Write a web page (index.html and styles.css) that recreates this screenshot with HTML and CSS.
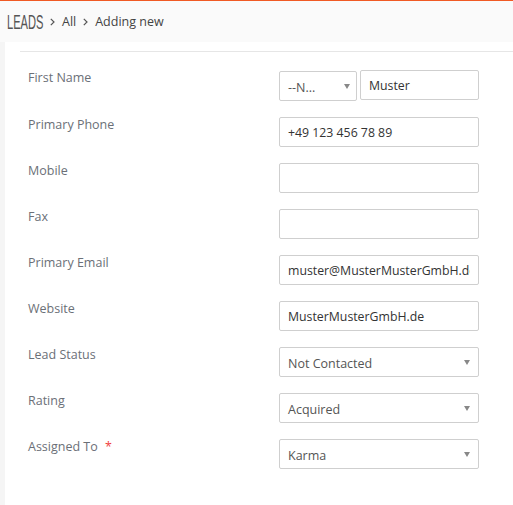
FILE: index.html
```html
<!DOCTYPE html>
<html lang="en">
<head>
<meta charset="utf-8">
<title>Leads - Adding new</title>
<link rel="stylesheet" href="styles.css">
</head>
<body>
<div class="topline"></div>
<header class="header">
  <span class="module">LEADS</span>
  <svg class="chev" width="5" height="8" viewBox="0 0 5 8"><path d="M0.8 0.8L4 4L0.8 7.2" fill="none" stroke="#555" stroke-width="1.2"/></svg>
  <span class="crumb">All</span>
  <svg class="chev" width="5" height="8" viewBox="0 0 5 8"><path d="M0.8 0.8L4 4L0.8 7.2" fill="none" stroke="#555" stroke-width="1.2"/></svg>
  <span class="crumb">Adding new</span>
</header>
<div class="main">
  <div class="side"></div>
  <div class="content">
    <div class="divider"></div>
    <form class="form">
      <div class="row">
        <label class="label">First Name</label>
        <div class="field name-field">
          <div class="select salutation"><span>--N...</span><svg width="6" height="5" viewBox="0 0 6 5"><path d="M0 0H6L3 5Z" fill="#888"/></svg></div>
          <input class="input first" type="text" value="Muster">
        </div>
      </div>
      <div class="row">
        <label class="label">Primary Phone</label>
        <div class="field"><input class="input" type="text" value="+49 123 456 78 89"></div>
      </div>
      <div class="row">
        <label class="label">Mobile</label>
        <div class="field"><input class="input" type="text" value=""></div>
      </div>
      <div class="row">
        <label class="label">Fax</label>
        <div class="field"><input class="input" type="text" value=""></div>
      </div>
      <div class="row">
        <label class="label">Primary Email</label>
        <div class="field"><input class="input" type="text" value="muster@MusterMusterGmbH.de"></div>
      </div>
      <div class="row">
        <label class="label">Website</label>
        <div class="field"><input class="input" type="text" value="MusterMusterGmbH.de"></div>
      </div>
      <div class="row">
        <label class="label">Lead Status</label>
        <div class="field"><div class="select"><span>Not Contacted</span><svg width="6" height="5" viewBox="0 0 6 5"><path d="M0 0H6L3 5Z" fill="#888"/></svg></div></div>
      </div>
      <div class="row">
        <label class="label">Rating</label>
        <div class="field"><div class="select"><span>Acquired</span><svg width="6" height="5" viewBox="0 0 6 5"><path d="M0 0H6L3 5Z" fill="#888"/></svg></div></div>
      </div>
      <div class="row">
        <label class="label">Assigned To <span class="req">*</span></label>
        <div class="field"><div class="select"><span>Karma</span><svg width="6" height="5" viewBox="0 0 6 5"><path d="M0 0H6L3 5Z" fill="#888"/></svg></div></div>
      </div>
    </form>
  </div>
</div>
</body>
</html>
```

FILE: styles.css
```css
* { box-sizing: border-box; }
html, body { margin: 0; padding: 0; background: #fff; }
body {
  font-family: "Open Sans", "Liberation Sans", sans-serif;
  font-size: 12.5px;
  color: #333;
  width: 513px;
  height: 505px;
  overflow: hidden;
}
.topline { height: 1px; background: #f05a24; }
.header {
  height: 41px;
  background: #fafafa;
  display: flex;
  align-items: center;
  padding-left: 7px;
}
.module {
  display: inline-block;
  width: 36px;
  font-family: "Liberation Sans", sans-serif;
  font-size: 19.5px;
  line-height: 20px;
  color: #555;
  white-space: nowrap;
  transform: scaleX(0.57);
  transform-origin: left center;
}
.chev { margin: 0 7px; flex: none; }
.crumb { color: #444; font-size: 12.5px; line-height: 18px; }
.main { display: flex; height: 463px; }
.side { width: 5px; background: #f5f5f5; flex: none; }
.content { flex: 1; padding: 9px 0 0 15px; }
.divider { border-top: 1px solid #e6e6e6; }
.form { display: grid; row-gap: 14px; padding: 16px 0 0 8px; }
.row { display: grid; grid-template-columns: 251px 200px; align-items: start; }
.label { font-size: 12.5px; line-height: 18px; padding-top: 1px; color: #6b7077; }
.req { color: #f04040; margin-left: 4px; }
.field { margin-top: 2px; }
.input {
  display: block;
  width: 200px;
  height: 30px;
  border: 1px solid #cfcfcf;
  border-radius: 2px;
  padding: 0 8px;
  font-family: "Open Sans", "Liberation Sans", sans-serif;
  font-size: 12.3px;
  color: #333;
  background: #fff;
  outline: none;
}
.select {
  width: 200px;
  height: 30px;
  border: 1px solid #cfcfcf;
  border-radius: 2px;
  padding: 2px 8px 0 8px;
  display: flex;
  align-items: center;
  justify-content: space-between;
  color: #555;
  font-size: 12.5px;
  background: #fff;
}
.select svg { margin-top: -2px; }
.name-field { display: flex; gap: 3px; align-items: flex-start; }
.salutation { width: 78px; margin-top: 1px; padding-right: 6px; }
.input.first { width: 119px; }
```
